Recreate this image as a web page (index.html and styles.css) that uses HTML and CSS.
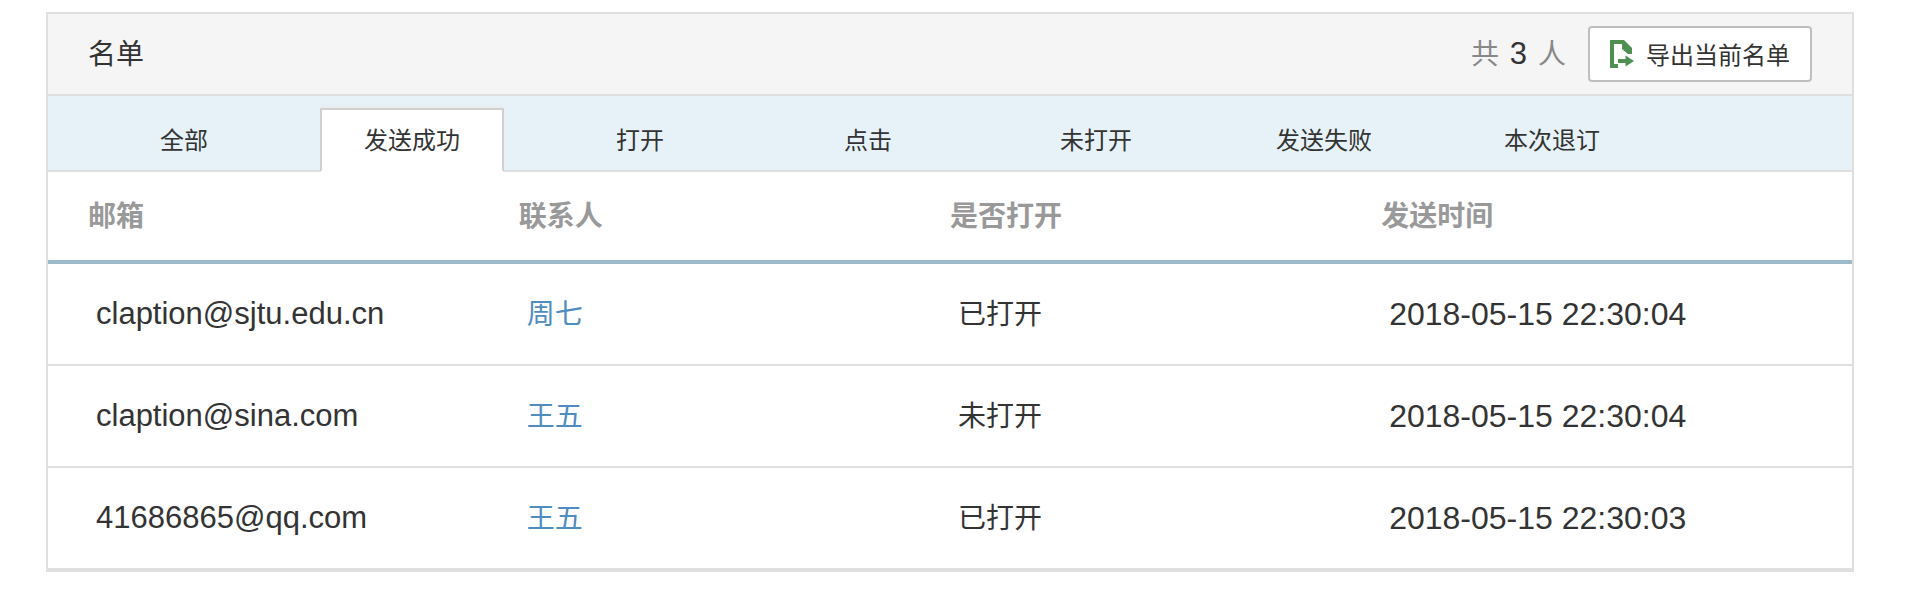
FILE: index.html
```html
<!DOCTYPE html>
<html lang="zh-CN">
<head>
<meta charset="utf-8">
<title>名单</title>
<link rel="stylesheet" href="styles.css">
</head>
<body>
<section class="card">
  <header class="card-header">
    <h1 class="title">名单</h1>
    <div class="actions">
      <p class="total">共 <strong class="total-count">3</strong> 人</p>
      <button class="export" type="button">
        <svg class="export-icon" viewBox="0 0 24 28" aria-hidden="true">
          <path fill="#4f8f52" d="M0 0H14L22 8V14H18L12 9V4H4V24H8V28H0Z"/>
          <path fill="#4f8f52" d="M8 19H15.500V15.500L24 21L15.500 26.500V23H8Z"/>
        </svg>
        <span>导出当前名单</span>
      </button>
    </div>
  </header>
  <nav class="tabs">
    <a class="tab" href="#all">全部</a>
    <a class="tab tab-active" href="#sent" aria-current="page">发送成功</a>
    <a class="tab" href="#opened">打开</a>
    <a class="tab" href="#clicked">点击</a>
    <a class="tab" href="#unopened">未打开</a>
    <a class="tab" href="#failed">发送失败</a>
    <a class="tab" href="#unsubscribed">本次退订</a>
  </nav>
  <table class="list">
    <thead>
      <tr><th class="col-first">邮箱</th><th class="col">联系人</th><th class="col">是否打开</th><th>发送时间</th></tr>
    </thead>
    <tbody>
      <tr><td class="email">claption@sjtu.edu.cn</td><td><a class="contact" href="#c1">周七</a></td><td>已打开</td><td class="time">2018-05-15 22:30:04</td></tr>
      <tr><td class="email">claption@sina.com</td><td><a class="contact" href="#c2">王五</a></td><td>未打开</td><td class="time">2018-05-15 22:30:04</td></tr>
      <tr><td class="email">41686865@qq.com</td><td><a class="contact" href="#c3">王五</a></td><td>已打开</td><td class="time">2018-05-15 22:30:03</td></tr>
    </tbody>
  </table>
</section>
</body>
</html>
```
FILE: styles.css
```css
* { box-sizing: border-box; }

body {
  margin: 12px 70px 36px 46px;
  background: #fff;
  color: #333;
  font-family: Inter, "Noto Sans CJK SC", sans-serif;
  font-size: 28px;
  line-height: 40px;
}

.card {
  border: 2px solid #dfdfdf;
  border-bottom-width: 4px;
  background: #fff;
  box-shadow: 0 2px 4px rgba(0, 0, 0, 0.06);
}

.card-header {
  display: flex;
  align-items: center;
  justify-content: space-between;
  padding: 12px 40px;
  border-bottom: 2px solid #dfdfdf;
  background: #f5f5f5;
}

.title {
  margin: 0;
  font-size: 28px;
  font-weight: 400;
}

.actions {
  display: flex;
  align-items: center;
  gap: 22px;
}

.total {
  margin: 0;
  color: #888;
}

.total-count {
  margin: 0 3px;
  color: #333;
  font-family: "Liberation Sans", sans-serif;
  font-size: 31px;
  font-weight: 400;
}

.export {
  display: flex;
  align-items: center;
  gap: 12px;
  padding: 8px 20px;
  border: 2px solid #bfbfbf;
  border-radius: 4px;
  background: #fff;
  color: #333;
  font-family: "Noto Sans CJK SC", sans-serif;
  font-size: 24px;
  line-height: 36px;
}

.export-icon {
  width: 24px;
  height: 28px;
}

.tabs {
  display: flex;
  gap: 44px;
  padding: 12px 44px 0;
  border-bottom: 2px solid #dfdfdf;
  background: #e6f2f8;
}

.tab {
  width: 184px;
  margin-bottom: -2px;
  padding: 12px 0 10px;
  border: 2px solid transparent;
  color: #333;
  font-size: 24px;
  line-height: 38px;
  text-align: center;
  text-decoration: none;
}

.tab-active {
  border-color: #d0d0d0;
  border-bottom-color: #fff;
  background: #fff;
  box-shadow: 0 -3px 2px -1px #ebebeb;
}

.list {
  width: 100%;
  border-collapse: separate;
  border-spacing: 0;
  table-layout: fixed;
}

.list th {
  padding: 24px 0;
  border-bottom: 4px solid #9dbaca;
  color: #999;
  font-weight: 700;
  text-align: left;
}

.list .col-first {
  width: 26.1%;
  padding-left: 40px;
}

.list .col {
  width: 23.9%;
}

.list td {
  padding: 30px 8px;
  border-bottom: 2px solid #dfdfdf;
}

.list .email {
  padding-left: 48px;
  font-family: "Liberation Sans", sans-serif;
  font-size: 31px;
}

.list .time {
  font-family: "Liberation Sans", sans-serif;
  font-size: 32px;
}

.list tr:last-child td {
  border-bottom: 0;
}

.contact {
  color: #4f8cc0;
  text-decoration: none;
}
```
